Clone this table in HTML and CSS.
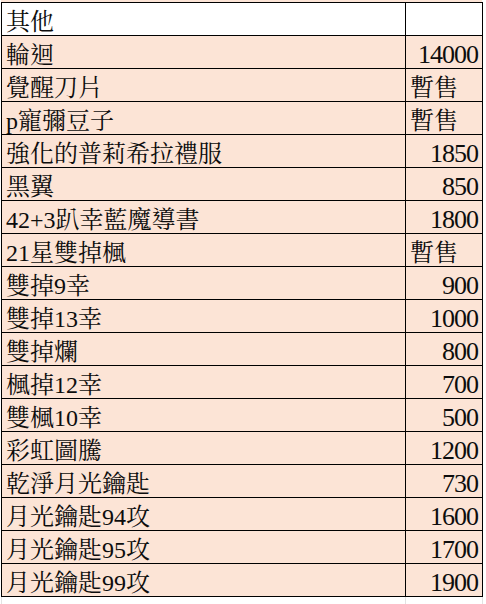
FILE: index.html
```html
<!DOCTYPE html>
<html lang="zh-Hant">
<head>
<meta charset="utf-8">
<title>價目表</title>
<link rel="stylesheet" href="styles.css">
</head>
<body>
<div class="strip"></div>
<div class="sheet">
  <div class="cell white">其他</div><div class="cell white"></div>
  <div class="cell">輪迴</div><div class="cell num">14000</div>
  <div class="cell">覺醒刀片</div><div class="cell txt">暫售</div>
  <div class="cell">p寵彌豆子</div><div class="cell txt">暫售</div>
  <div class="cell">強化的普莉希拉禮服</div><div class="cell num">1850</div>
  <div class="cell">黑翼</div><div class="cell num">850</div>
  <div class="cell">42+3趴幸藍魔導書</div><div class="cell num">1800</div>
  <div class="cell">21星雙掉楓</div><div class="cell txt">暫售</div>
  <div class="cell">雙掉9幸</div><div class="cell num">900</div>
  <div class="cell">雙掉13幸</div><div class="cell num">1000</div>
  <div class="cell">雙掉爛</div><div class="cell num">800</div>
  <div class="cell">楓掉12幸</div><div class="cell num">700</div>
  <div class="cell">雙楓10幸</div><div class="cell num">500</div>
  <div class="cell">彩虹圖騰</div><div class="cell num">1200</div>
  <div class="cell">乾淨月光鑰匙</div><div class="cell num">730</div>
  <div class="cell">月光鑰匙94攻</div><div class="cell num">1600</div>
  <div class="cell">月光鑰匙95攻</div><div class="cell num">1700</div>
  <div class="cell">月光鑰匙99攻</div><div class="cell num">1900</div>
</div>
<div class="below">
  <div class="blank"></div><div class="blank"></div>
</div>
</body>
</html>
```
FILE: styles.css
```css
html, body {
  margin: 0;
  padding: 0;
  background: #ffffff;
}
body {
  width: 486px;
  height: 604px;
  overflow: hidden;
  font-family: "Liberation Serif", "Noto Serif CJK TC", "Noto Sans CJK TC", serif;
  font-size: 24px;
  color: #0d0d0d;
}
.strip {
  height: 2px;
  width: 481px;
  margin-left: 1px;
  background: #fce4d6;
}
.sheet {
  display: grid;
  grid-template-columns: 403px 76px;
  grid-auto-rows: 32px;
  gap: 1px;
  padding: 1px;
  background: #000000;
  margin-left: 1px;
  width: max-content;
}
.cell {
  background: #fce4d6;
  display: flex;
  align-items: flex-end;
  padding: 0 3px 0 4px;
  line-height: 26px;
  white-space: nowrap;
}
.cell.white {
  background: #ffffff;
}
.num {
  justify-content: flex-end;
  font-size: 26px;
  letter-spacing: -1px;
  padding-right: 4px;
  padding-bottom: 0;
}
.txt {
  justify-content: flex-start;
}
.below {
  display: grid;
  grid-template-columns: 403px 76px;
  grid-auto-rows: 8px;
  gap: 1px;
  padding: 0 1px;
  margin-left: 1px;
  width: max-content;
  background: #e2e2e2;
}
.blank {
  background: #ffffff;
}
```
